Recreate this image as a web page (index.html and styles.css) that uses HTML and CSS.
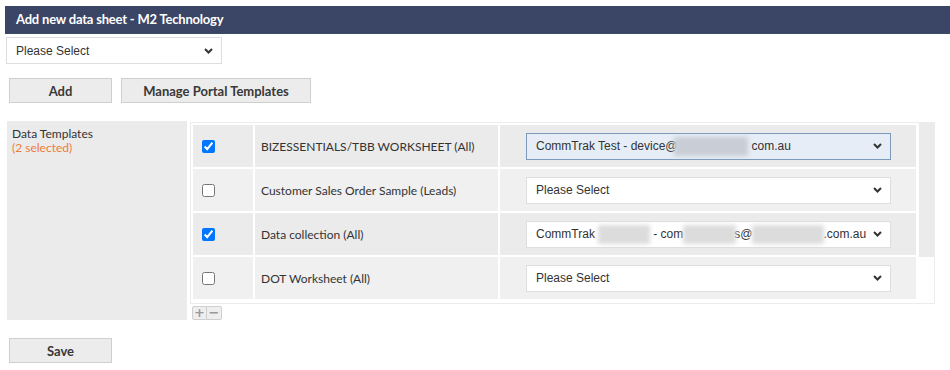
FILE: index.html
```html
<!DOCTYPE html>
<html>
<head>
<meta charset="utf-8">
<link rel="stylesheet" href="styles.css">
</head>
<body>
<div class="page">
  <div class="header">Add new data sheet - M2 Technology</div>
  <div class="select top-select"><span>Please Select</span><svg class="chev" width="9" height="6" viewBox="0 0 9 6"><path d="M1 1l3.5 3.5L8 1" fill="none" stroke="#333" stroke-width="2"/></svg></div>
  <div class="btn-row">
    <button class="btn btn-add">Add</button>
    <button class="btn btn-manage">Manage Portal Templates</button>
  </div>
  <div class="section">
    <div class="side">
      <div class="side-title">Data Templates</div>
      <div class="side-count">(2 selected)</div>
    </div>
    <div class="table-col">
      <div class="table-box">
        <div class="rows">
          <div class="row dark">
            <div class="cell c-check"><input type="checkbox" checked></div>
            <div class="cell c-name">BIZESSENTIALS/TBB WORKSHEET (All)</div>
            <div class="cell c-sel"><div class="select focus"><span>CommTrak Test - device@<span class="blur b1"></span>com.au</span><svg class="chev" width="9" height="6" viewBox="0 0 9 6"><path d="M1 1l3.5 3.5L8 1" fill="none" stroke="#333" stroke-width="2"/></svg></div></div>
          </div>
          <div class="row light">
            <div class="cell c-check"><input type="checkbox"></div>
            <div class="cell c-name">Customer Sales Order Sample (Leads)</div>
            <div class="cell c-sel"><div class="select"><span>Please Select</span><svg class="chev" width="9" height="6" viewBox="0 0 9 6"><path d="M1 1l3.5 3.5L8 1" fill="none" stroke="#333" stroke-width="2"/></svg></div></div>
          </div>
          <div class="row dark">
            <div class="cell c-check"><input type="checkbox" checked></div>
            <div class="cell c-name">Data collection (All)</div>
            <div class="cell c-sel"><div class="select"><span>CommTrak<span class="blur b2 soft"></span>&nbsp;- com<span class="blur b3 soft"></span>s@<span class="blur b4 soft"></span>.com.au</span><svg class="chev" width="9" height="6" viewBox="0 0 9 6"><path d="M1 1l3.5 3.5L8 1" fill="none" stroke="#333" stroke-width="2"/></svg></div></div>
          </div>
          <div class="row light">
            <div class="cell c-check"><input type="checkbox"></div>
            <div class="cell c-name">DOT Worksheet (All)</div>
            <div class="cell c-sel"><div class="select"><span>Please Select</span><svg class="chev" width="9" height="6" viewBox="0 0 9 6"><path d="M1 1l3.5 3.5L8 1" fill="none" stroke="#333" stroke-width="2"/></svg></div></div>
          </div>
          <div class="row dark"></div>
        </div>
        <div class="scroll-track"><div class="scroll-thumb"></div></div>
      </div>
      <div class="pm">
        <span class="pm-btn">+</span><span class="pm-btn">&minus;</span>
      </div>
    </div>
  </div>
  <button class="btn btn-save">Save</button>
</div>
</body>
</html>
```
FILE: styles.css
```css
* { box-sizing: border-box; }
html, body { margin: 0; padding: 0; background: #fff; }
body { font-family: Lato, "Open Sans", sans-serif; color: #333; }
.page { padding-top: 6px; width: 950px; }
.header {
  margin-left: 5px;
  height: 28px;
  background: #3b4566;
  border-bottom: 1px solid #3d4d68;
  color: #fff;
  font-weight: 700;
  font-size: 13px;
  line-height: 27px;
  padding-left: 11px;
  letter-spacing: -0.2px;
}
.select {
  display: flex;
  align-items: center;
  justify-content: space-between;
  height: 27px;
  border: 1px solid #dedede;
  background: #fff;
  font-family: "Liberation Sans", Arial, sans-serif;
  font-size: 12px;
  color: #333;
  padding: 0 8px 0 9px;
  white-space: nowrap;
}
.select > span { display: flex; align-items: center; }
.select.focus { background: #e6edf6; border-color: #7b9ab9; }
.chev { flex: none; }
.top-select { margin: 3px 0 0 6px; width: 216px; }
.btn-row { display: flex; gap: 9px; margin: 14px 0 0 9px; }
.btn {
  height: 25px;
  background: #ececec;
  border: 1px solid #cfcfcf;
  font-family: Lato, sans-serif;
  font-weight: 700;
  font-size: 13px;
  color: #383838;
  padding: 0;
  cursor: pointer;
}
.btn-add { width: 103px; }
.btn-manage { width: 190px; }
.section { display: flex; gap: 3px; margin: 18px 0 0 7px; }
.side {
  width: 180px;
  height: 199px;
  background: #ebebeb;
  padding: 6px 5px;
  font-size: 12px;
  line-height: 14px;
}
.side-count { color: #ef7b3b; }
.table-col { display: flex; flex-direction: column; margin-top: 1px; }
.table-box {
  width: 745px;
  height: 182px;
  border: 1px solid #ececec;
  display: flex;
  overflow: hidden;
}
.rows { padding: 2px 0 0 2px; display: flex; flex-direction: column; gap: 2px; width: 725px; }
.row { display: flex; gap: 2px; height: 42px; flex: none; }
.cell { display: flex; align-items: center; }
.row.dark .cell { background: #ebebeb; }
.row.light .cell { background: #f0f0f0; }
.c-check { width: 60px; padding-left: 9px; }
.c-check input { margin: 0; width: 13px; height: 13px; }
.c-name { width: 243px; padding-left: 6px; font-size: 12px; color: #333; }
.c-sel { width: 416px; padding-left: 26px; }
.c-sel .select { width: 365px; }
.blur {
  display: inline-block;
  height: 19px;
  background: #c9ced6;
  filter: blur(2px);
}
.blur.soft { background: #dcdcdc; }
.b1 { width: 74px; margin: 0 4px 0 -4px; }
.b2 { width: 52px; margin-left: 3px; }
.b3 { width: 53px; margin-right: -2px; }
.b4 { width: 72px; margin-right: -1px; }
.scroll-track { margin-left: 3px; width: 15px; height: 100%; }
.scroll-thumb { height: 135px; background: #ebebeb; margin-top: -1px; }
.pm { display: flex; margin: 2px 0 0 2px; }
.pm-btn {
  width: 15px;
  height: 14px;
  border: 1px solid #cfcfcf;
  background: #eee;
  color: #999;
  font-family: "DejaVu Sans", sans-serif;
  font-size: 13px;
  font-weight: 700;
  line-height: 11px;
  text-align: center;
}
.pm-btn:first-child { border-radius: 2px 0 0 2px; }
.pm-btn:last-child { border-left: 0; border-radius: 0 2px 2px 0; }
.btn-save { display: block; width: 103px; margin: 18px 0 0 9px; }
```
